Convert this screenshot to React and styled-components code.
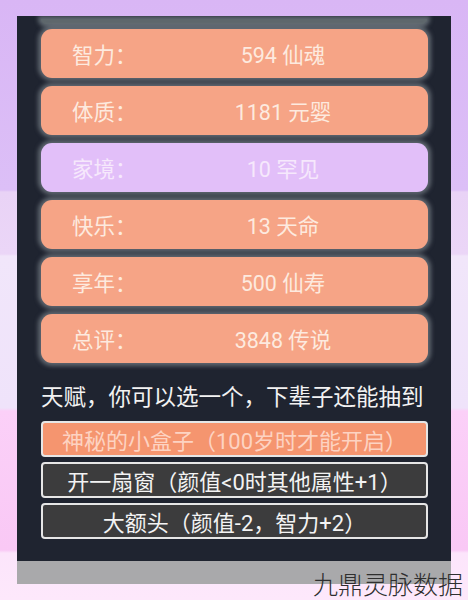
import React from 'react';
import styled, { createGlobalStyle } from 'styled-components';

const GlobalStyle = createGlobalStyle`
  html, body {
    margin: 0;
    padding: 0;
    height: 100%;
  }
  body {
    font-family: Roboto, 'Noto Sans CJK SC', sans-serif;
    background: linear-gradient(
      180deg,
      #d9b6f5 0px,
      #dcbff7 190px,
      #e9d3f6 192px,
      #ebd6f7 254px,
      #f1e6fa 256px,
      #efe3fa 408px,
      #fbd0f8 411px,
      #f9c8f5 550px,
      #fce5fb 553px,
      #fde8fb 100%
    );
    overflow: hidden;
  }
`;

const Page = styled.div`
  position: relative;
  width: 468px;
  height: 600px;
  padding-top: 16px;
  box-sizing: border-box;
`;

const Panel = styled.div`
  margin-left: 17px;
  width: 434px;
  background: #1f2430;
  overflow: hidden;
  display: flex;
  flex-direction: column;
`;

const CutGlow = styled.div`
  height: 5px;
  margin: 3px 24px 5px;
  background: #5e676c;
  border-radius: 0 0 10px 10px;
  box-shadow: 0 0 4px 3px rgba(150, 160, 165, 0.55);
`;

const StatList = styled.div`
  display: flex;
  flex-direction: column;
  gap: 8px;
  padding: 0 23px 0 24px;
`;

const StatCard = styled.div`
  height: 49px;
  display: flex;
  align-items: center;
  border-radius: 11px;
  background: ${(props) => (props.purple ? '#e2bff9' : '#f6a486')};
  color: ${(props) => (props.purple ? '#f6e8fc' : '#fdeadf')};
  box-shadow: 0 0 4px 3px rgba(160, 170, 175, 0.5);
  font-size: 21.5px;
`;

const StatLabel = styled.span`
  width: 66px;
  padding-left: 31px;
  white-space: nowrap;
`;

const StatValue = styled.span`
  flex: 1;
  text-align: center;
  white-space: nowrap;
`;

const Heading = styled.div`
  margin: 19px 0 9px 24px;
  font-size: 22.5px;
  line-height: 30px;
  color: #f2f2f2;
  white-space: nowrap;
`;

const OptionList = styled.div`
  display: flex;
  flex-direction: column;
  gap: 5px;
  padding: 0 23px 22px 24px;
`;

const Option = styled.div`
  height: 36px;
  box-sizing: border-box;
  display: flex;
  align-items: center;
  justify-content: center;
  border: 2px solid #e6e6e6;
  border-radius: 4px;
  font-size: 22px;
  white-space: nowrap;
  background: ${(props) => (props.active ? '#f5956f' : '#3c3c3d')};
  color: ${(props) => (props.active ? '#fdd3c2' : '#f3f3f3')};
`;

const FooterBand = styled.div`
  height: 23px;
  background: #a9a9ab;
`;

const Watermark = styled.div`
  position: absolute;
  right: 5px;
  bottom: 1px;
  font-family: 'Noto Sans CJK SC', sans-serif;
  font-weight: 300;
  font-size: 25px;
  line-height: 32px;
  color: #2f2f2f;
`;

const stats = [
  { label: '智力：', value: '594 仙魂' },
  { label: '体质：', value: '1181 元婴' },
  { label: '家境：', value: '10 罕见', purple: true },
  { label: '快乐：', value: '13 天命' },
  { label: '享年：', value: '500 仙寿' },
  { label: '总评：', value: '3848 传说' },
];

const talents = [
  { text: '神秘的小盒子（100岁时才能开启）', active: true },
  { text: '开一扇窗（颜值<0时其他属性+1）' },
  { text: '大额头（颜值-2，智力+2）' },
];

export default function App() {
  return (
    <>
      <GlobalStyle />
      <Page>
        <Panel>
          <CutGlow />
          <StatList>
            {stats.map((s) => (
              <StatCard key={s.label} purple={s.purple}>
                <StatLabel>{s.label}</StatLabel>
                <StatValue>{s.value}</StatValue>
              </StatCard>
            ))}
          </StatList>
          <Heading>天赋，你可以选一个，下辈子还能抽到</Heading>
          <OptionList>
            {talents.map((t) => (
              <Option key={t.text} active={t.active}>
                {t.text}
              </Option>
            ))}
          </OptionList>
          <FooterBand />
        </Panel>
        <Watermark>九鼎灵脉数据</Watermark>
      </Page>
    </>
  );
}
